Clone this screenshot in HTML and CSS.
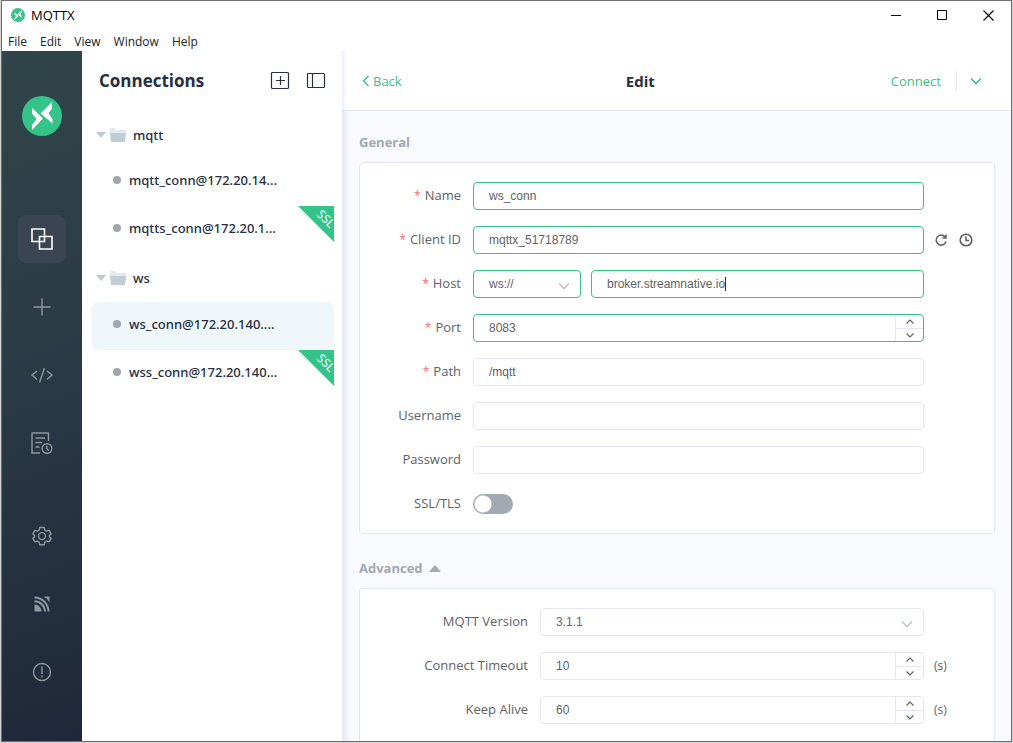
FILE: index.html
```html
<!DOCTYPE html>
<html lang="en">
<head>
<meta charset="utf-8">
<title>MQTTX</title>
<meta name="viewport" content="width=device-width, initial-scale=1">
<link rel="stylesheet" href="styles.css">
</head>
<body>
<svg class="defs" aria-hidden="true">
  <symbol id="logo" viewBox="0 0 40 40">
    <circle cx="20" cy="20" r="20" fill="#34c388"/>
    <path d="M10 12 L21 22.500 L10 34 L10 29 L14.500 23 L10 17.500Z" fill="#fff"/>
    <path d="M30 6 L30 12.500 L26.500 17 L30.500 23 L30.500 27.500 L18.500 17.500Z" fill="#fff"/>
  </symbol>
  <symbol id="chevron" viewBox="0 0 12 8"><path d="M1 1.500 L6 6.500 L11 1.500" fill="none" stroke="currentColor" stroke-width="1.600"/></symbol>
  <symbol id="step-up" viewBox="0 0 8 5"><path d="M.5 4.500 L4 1 L7.500 4.500" fill="none" stroke="currentColor" stroke-width="1.200"/></symbol>
  <symbol id="step-down" viewBox="0 0 8 5"><path d="M.5 .5 L4 4 L7.500 .5" fill="none" stroke="currentColor" stroke-width="1.200"/></symbol>
  <symbol id="folder" viewBox="0 0 16 14">
    <path d="M0 0H5L6.500 2H16V5H0Z" fill="#e1eaef"/>
    <path d="M0 5H16L15 14H1Z" fill="#bfced6"/>
  </symbol>
</svg>

<div class="window">
  <header class="titlebar">
    <div class="app-name"><svg class="app-icon"><use href="#logo"/></svg>MQTTX</div>
    <div class="window-controls">
      <button type="button" aria-label="Minimize"><svg viewBox="0 0 11 11"><path d="M0 5.500H10" stroke="#000"/></svg></button>
      <button type="button" aria-label="Maximize"><svg viewBox="0 0 11 11"><path d="M.5 .5H9.500V9.500H.5Z" stroke="#000" fill="none"/></svg></button>
      <button type="button" aria-label="Close"><svg viewBox="0 0 11 11"><path d="M.5 .5L10.500 10.500M10.500 .5L.5 10.500" stroke="#000" stroke-width="1.100"/></svg></button>
    </div>
  </header>
  <nav class="menubar" aria-label="Menu">
    <button type="button">File</button>
    <button type="button">Edit</button>
    <button type="button">View</button>
    <button type="button">Window</button>
    <button type="button">Help</button>
  </nav>

  <div class="workspace">
    <nav class="rail" aria-label="Main">
      <svg class="rail-logo"><use href="#logo"/></svg>
      <div class="rail-group">
        <a href="#connections" class="rail-link active" aria-label="Connections"><svg viewBox="0 0 24 24"><path d="M2 2H14.500V14.500H2ZM9.500 9.500H22V22H9.500Z"/></svg></a>
        <a href="#new" class="rail-link" aria-label="New connection"><svg viewBox="0 0 24 24"><path d="M12 3.500V20.500M3.500 12H20.500"/></svg></a>
        <a href="#script" class="rail-link" aria-label="Script"><svg viewBox="0 0 24 24"><path d="M7 8L2 12L7 16.500M17 8L22 12L17 16.500M14.500 5L9.500 19.500"/></svg></a>
        <a href="#log" class="rail-link" aria-label="Log"><svg viewBox="0 0 24 24"><path d="M18.500 10V2H2V22H10M5.500 7H15M5.500 11.500H12M5.500 16H9.500"/><circle cx="17" cy="17.500" r="4.800"/><path d="M16.800 14.800V17.800L18.800 19.500"/></svg></a>
      </div>
      <div class="rail-group">
        <a href="#settings" class="rail-link" aria-label="Settings"><svg viewBox="0 0 24 24"><path d="M9.800 3.500H14.200L14.900 6.100L16.600 7.100L19.200 6.400L21.200 9.800L19.300 11.700V12.500L21.200 14.400L19.200 17.800L16.600 17.100L14.900 18.100L14.200 20.700H9.800L9.100 18.100L7.400 17.100L4.800 17.800L2.800 14.400L4.700 12.500V11.700L2.800 9.800L4.800 6.400L7.400 7.100L9.100 6.100Z" stroke-linejoin="round"/><circle cx="12" cy="12.100" r="3.500"/></svg></a>
        <a href="#feed" class="rail-link" aria-label="Feed"><svg viewBox="0 0 24 24"><g stroke-width="2"><path d="M4.500 9.200A10.500 10.500 0 0 1 15 19.500M4.500 5.500A14.200 14.200 0 0 1 18.500 19.500"/></g><path d="M4.500 12.500A7 7 0 0 1 11.500 19.500H4.500ZM13.500 4.500H19.500V10.500A13 13 0 0 0 13.500 4.500Z" fill="currentColor" stroke="none"/></svg></a>
        <a href="#about" class="rail-link" aria-label="About"><svg viewBox="0 0 24 24"><circle cx="12" cy="12" r="8.500"/><path d="M12 6.500V14M12 15.500V17.500"/></svg></a>
      </div>
    </nav>

    <aside class="connections">
      <div class="connections-head">
        <h1>Connections</h1>
        <button type="button" aria-label="New connection"><svg viewBox="0 0 20 20"><rect x="1.500" y="1.500" width="17" height="16" rx="1"/><path d="M10.500 5V14M6 9.500H15"/></svg></button>
        <button type="button" aria-label="Toggle panel"><svg viewBox="0 0 20 20"><rect x="1.500" y="2.500" width="17" height="14" rx="1"/><path d="M6.500 2.500V16.500"/></svg></button>
      </div>
      <ul class="tree">
        <li class="folder"><span class="arrow"></span><svg><use href="#folder"/></svg>mqtt</li>
        <li class="item"><span class="dot"></span><a href="#c1">mqtt_conn@172.20.14...</a></li>
        <li class="item"><span class="dot"></span><a href="#c2">mqtts_conn@172.20.1...</a><span class="ribbon"><span>SSL</span></span></li>
        <li class="folder"><span class="arrow"></span><svg><use href="#folder"/></svg>ws</li>
        <li class="item selected"><span class="dot"></span><a href="#c3">ws_conn@172.20.140....</a></li>
        <li class="item"><span class="dot"></span><a href="#c4">wss_conn@172.20.140...</a><span class="ribbon"><span>SSL</span></span></li>
      </ul>
    </aside>

    <main class="editor">
      <header class="editor-head">
        <a class="back" href="#back"><svg viewBox="0 0 8 12"><path d="M6.500 1L1.500 6L6.500 11"/></svg>Back</a>
        <h2>Edit</h2>
        <div class="actions">
          <button type="button">Connect</button>
          <button type="button" class="more" aria-label="More"><svg><use href="#chevron"/></svg></button>
        </div>
      </header>

      <form class="form">
        <h3>General</h3>
        <section class="card">
          <div class="row">
            <label class="required" for="name">Name</label>
            <input class="field focus" id="name" type="text" value="ws_conn">
          </div>
          <div class="row">
            <label class="required" for="client">Client ID</label>
            <input class="field focus" id="client" type="text" value="mqttx_51718789">
            <div class="extra">
              <button type="button" aria-label="Refresh"><svg viewBox="0 0 14 14"><path d="M11.300 4.200A5 5 0 1 0 12 8.500"/><path d="M8.500 5H12V1.500"/></svg></button>
              <button type="button" aria-label="Use timestamp"><svg viewBox="0 0 14 14"><circle cx="7" cy="7" r="5.800"/><path d="M7 3.500V7.500H10.200"/></svg></button>
            </div>
          </div>
          <div class="row">
            <label class="required" for="host">Host</label>
            <div class="host">
              <div class="picker">
                <select class="field focus" aria-label="Protocol"><option>ws://</option></select>
                <svg><use href="#chevron"/></svg>
              </div>
              <div class="field focus typing"><input id="host" type="text" value="broker.streamnative.io"><span class="caret"></span></div>
            </div>
          </div>
          <div class="row">
            <label class="required" for="port">Port</label>
            <div class="field focus stepper">
              <input id="port" type="number" value="8083">
              <div class="steps">
                <button type="button" aria-label="Increase port"><svg><use href="#step-up"/></svg></button>
                <button type="button" aria-label="Decrease port"><svg><use href="#step-down"/></svg></button>
              </div>
            </div>
          </div>
          <div class="row">
            <label class="required" for="path">Path</label>
            <input class="field" id="path" type="text" value="/mqtt">
          </div>
          <div class="row">
            <label for="user">Username</label>
            <input class="field" id="user" type="text">
          </div>
          <div class="row">
            <label for="pass">Password</label>
            <input class="field" id="pass" type="password">
          </div>
          <div class="row">
            <label for="ssl">SSL/TLS</label>
            <input class="switch" id="ssl" type="checkbox" role="switch">
          </div>
        </section>

        <h3>Advanced<span class="fold"></span></h3>
        <section class="card wide-labels">
          <div class="row">
            <label for="version">MQTT Version</label>
            <div class="picker">
              <select class="field" id="version"><option>3.1.1</option></select>
              <svg><use href="#chevron"/></svg>
            </div>
          </div>
          <div class="row">
            <label for="timeout">Connect Timeout</label>
            <div class="field stepper">
              <input id="timeout" type="number" value="10">
              <div class="steps">
                <button type="button" aria-label="Increase timeout"><svg><use href="#step-up"/></svg></button>
                <button type="button" aria-label="Decrease timeout"><svg><use href="#step-down"/></svg></button>
              </div>
            </div>
            <span class="unit">(s)</span>
          </div>
          <div class="row">
            <label for="alive">Keep Alive</label>
            <div class="field stepper">
              <input id="alive" type="number" value="60">
              <div class="steps">
                <button type="button" aria-label="Increase keep alive"><svg><use href="#step-up"/></svg></button>
                <button type="button" aria-label="Decrease keep alive"><svg><use href="#step-down"/></svg></button>
              </div>
            </div>
            <span class="unit">(s)</span>
          </div>
        </section>
      </form>
    </main>
  </div>
</div>
</body>
</html>
```

FILE: styles.css
```css
:root {
  --green: #34c388;
  --line: #e4e7f1;
  --ink: #262e40;
  --text: #606266;
  --muted: #a2a9b0;
}
* { box-sizing: border-box; }
body {
  margin: 0;
  padding: 0 1px 1px;
  height: 100vh;
  overflow: hidden;
  background: #d2d2d0;
  color: var(--text);
  font: 13px/20px "Open Sans", "Noto Sans", sans-serif;
}
button {
  padding: 0;
  border: 0;
  background: none;
  color: inherit;
  font: inherit;
}
a { color: inherit; text-decoration: none; }
svg { display: block; flex: none; }
h1, h2, h3, ul { margin: 0; padding: 0; }
.defs { position: absolute; width: 0; height: 0; }

.window {
  display: flex;
  flex-direction: column;
  height: 100%;
  border: 1px solid #6e6f70;
  background: #fff;
}

.titlebar {
  display: flex;
  justify-content: space-between;
  align-items: center;
  height: 28px;
  padding-left: 9px;
  color: #000;
}
.app-name { display: flex; align-items: center; gap: 6px; }
.app-icon { width: 14px; height: 14px; }
.window-controls { display: flex; }
.window-controls button {
  display: grid;
  place-items: center;
  width: 46px;
  height: 28px;
}
.window-controls svg { width: 11px; height: 11px; }
.menubar {
  display: flex;
  align-items: center;
  gap: 13px;
  height: 22px;
  padding: 4px 0 0 6px;
  color: #222;
  font-size: 12px;
}

.workspace { display: flex; flex: 1; min-height: 0; }
.rail {
  display: flex;
  flex-direction: column;
  align-items: center;
  width: 80px;
  padding: 45px 0;
  background: linear-gradient(160deg, #304548 0%, #2b3c47 40%, #1f283a 100%);
  color: #8d989f;
}
.rail-logo { width: 40px; height: 40px; margin-bottom: 79px; }
.rail-group { display: flex; flex-direction: column; gap: 20px; }
.rail-group:last-child { margin-top: auto; }
.rail-link {
  display: grid;
  place-items: center;
  width: 48px;
  height: 48px;
  border-radius: 8px;
}
.rail-link svg {
  width: 24px;
  height: 24px;
  fill: none;
  stroke: currentColor;
  stroke-width: 1.4;
}
.rail-link.active { background: #3a4452; color: #fff; }
.rail-link.active svg { stroke-width: 1.6; }

.connections { width: 260px; }
.connections-head {
  display: flex;
  align-items: center;
  gap: 16px;
  height: 60px;
  padding: 0 16px 0 17px;
  color: var(--ink);
}
.connections-head h1 { flex: 1; font-size: 17px; line-height: 24px; }
.connections-head svg {
  width: 20px;
  height: 20px;
  fill: none;
  stroke: currentColor;
  stroke-width: 1.2;
}
.tree {
  padding: 0 8px 0 9px;
  color: var(--ink);
  font-family: "Noto Sans", "Open Sans", sans-serif;
  font-weight: 500;
  list-style: none;
}
.folder, .item { display: flex; align-items: center; height: 48px; }
.folder { height: 47px; padding-left: 5px; }
.item + .folder { height: 48px; }
.folder svg { width: 16px; height: 14px; margin: 0 7px 0 4px; }
.arrow {
  border: 5px solid transparent;
  border-top: 6px solid #c3c7cf;
  border-bottom: 0;
}
.item { position: relative; gap: 8px; padding: 0 8px 4px 22px; border-radius: 8px; }
.item a { white-space: nowrap; }
.item.selected { background: #eff7fb; }
.dot { width: 8px; height: 8px; border-radius: 50%; background: #a0a5b3; }
.ribbon {
  position: absolute;
  top: 0;
  right: 0;
  width: 36px;
  height: 36px;
  background: var(--green);
  clip-path: polygon(0 0, 100% 0, 100% 100%);
  color: #fff;
  font-weight: 400;
}
.ribbon span {
  position: absolute;
  top: 3px;
  right: -1px;
  font-size: 12px;
  transform: rotate(45deg);
}

.editor {
  display: flex;
  flex: 1;
  flex-direction: column;
  min-width: 0;
  overflow: hidden;
  background: linear-gradient(90deg, #e6e8f2, #f9fafe 8px);
}
.editor-head {
  display: flex;
  flex: none;
  justify-content: space-between;
  align-items: center;
  height: 60px;
  padding: 0 16px 0 20px;
  border-bottom: 1px solid var(--line);
  background: linear-gradient(90deg, #eef0f6, #fff 5px);
}
.editor-head h2 { margin-right: 12px; color: var(--ink); font-size: 15px; }
.back { display: flex; align-items: center; gap: 3px; color: var(--green); }
.back svg {
  width: 8px;
  height: 12px;
  fill: none;
  stroke: currentColor;
  stroke-width: 1.4;
}
.actions { display: flex; color: var(--green); }
.more {
  margin-left: 15px;
  padding: 0 13px;
  border-left: 1px solid var(--line);
}
.more svg { width: 12px; height: 8px; }

.form { padding: 21px 16px 0 17px; }
.form h3 {
  display: flex;
  align-items: center;
  gap: 6px;
  margin-bottom: 10px;
  color: var(--muted);
  font-size: 13px;
}
.fold {
  border: 6px solid transparent;
  border-top: 0;
  border-bottom: 7px solid var(--muted);
}
.card {
  display: grid;
  gap: 16px;
  margin-bottom: 24px;
  padding: 19px 0 15px;
  border: 1px solid var(--line);
  border-radius: 4px;
  background: #fff;
}
.row {
  display: grid;
  grid-template-columns: 113px 1fr 70px;
  align-items: center;
  min-height: 28px;
}
.wide-labels { padding-bottom: 60px; }
.wide-labels .row { grid-template-columns: 180px 1fr 70px; }
.row label { padding: 0 12px 2px 0; text-align: right; }
.required::before { content: "*"; margin-right: 4px; color: #f56c6c; font-size: 12px; }

.field {
  width: 100%;
  height: 28px;
  padding: 0 15px;
  border: 1px solid var(--line);
  border-radius: 4px;
  outline: 0;
  background: #fff;
  color: var(--text);
  font: 12px/16px "Liberation Sans", Arial, sans-serif;
}
.field.focus { border-color: var(--green); }
.field input {
  min-width: 0;
  padding: 0;
  border: 0;
  outline: 0;
  background: none;
  color: inherit;
  font: inherit;
}
select.field { appearance: none; }
.host { display: grid; grid-template-columns: 108px 1fr; gap: 10px; }
.picker { position: relative; }
.picker svg {
  position: absolute;
  right: 11px;
  top: 12px;
  width: 12px;
  height: 8px;
  color: #c0c4cc;
  pointer-events: none;
}
.typing { display: flex; align-items: center; }
.typing input { field-sizing: content; }
.caret { width: 1px; height: 14px; background: #303133; }
.stepper { display: flex; padding-right: 0; }
.stepper input { flex: 1; appearance: textfield; }
.steps {
  display: grid;
  grid-template-rows: 1fr 1fr;
  width: 28px;
  border-left: 1px solid var(--line);
}
.steps button { display: grid; place-items: center; }
.steps button + button { border-top: 1px solid var(--line); }
.steps svg { width: 8px; height: 5px; }
.extra { display: flex; gap: 11px; padding-left: 10px; }
.extra svg {
  width: 14px;
  height: 14px;
  fill: none;
  stroke: currentColor;
  stroke-width: 1.6;
}
.unit { padding-left: 10px; font-size: 12px; }
.switch {
  appearance: none;
  width: 40px;
  height: 20px;
  margin: 0;
  border-radius: 10px;
  background: radial-gradient(circle at 10px 10px, #fff 8px, var(--muted) 9px);
}
```
